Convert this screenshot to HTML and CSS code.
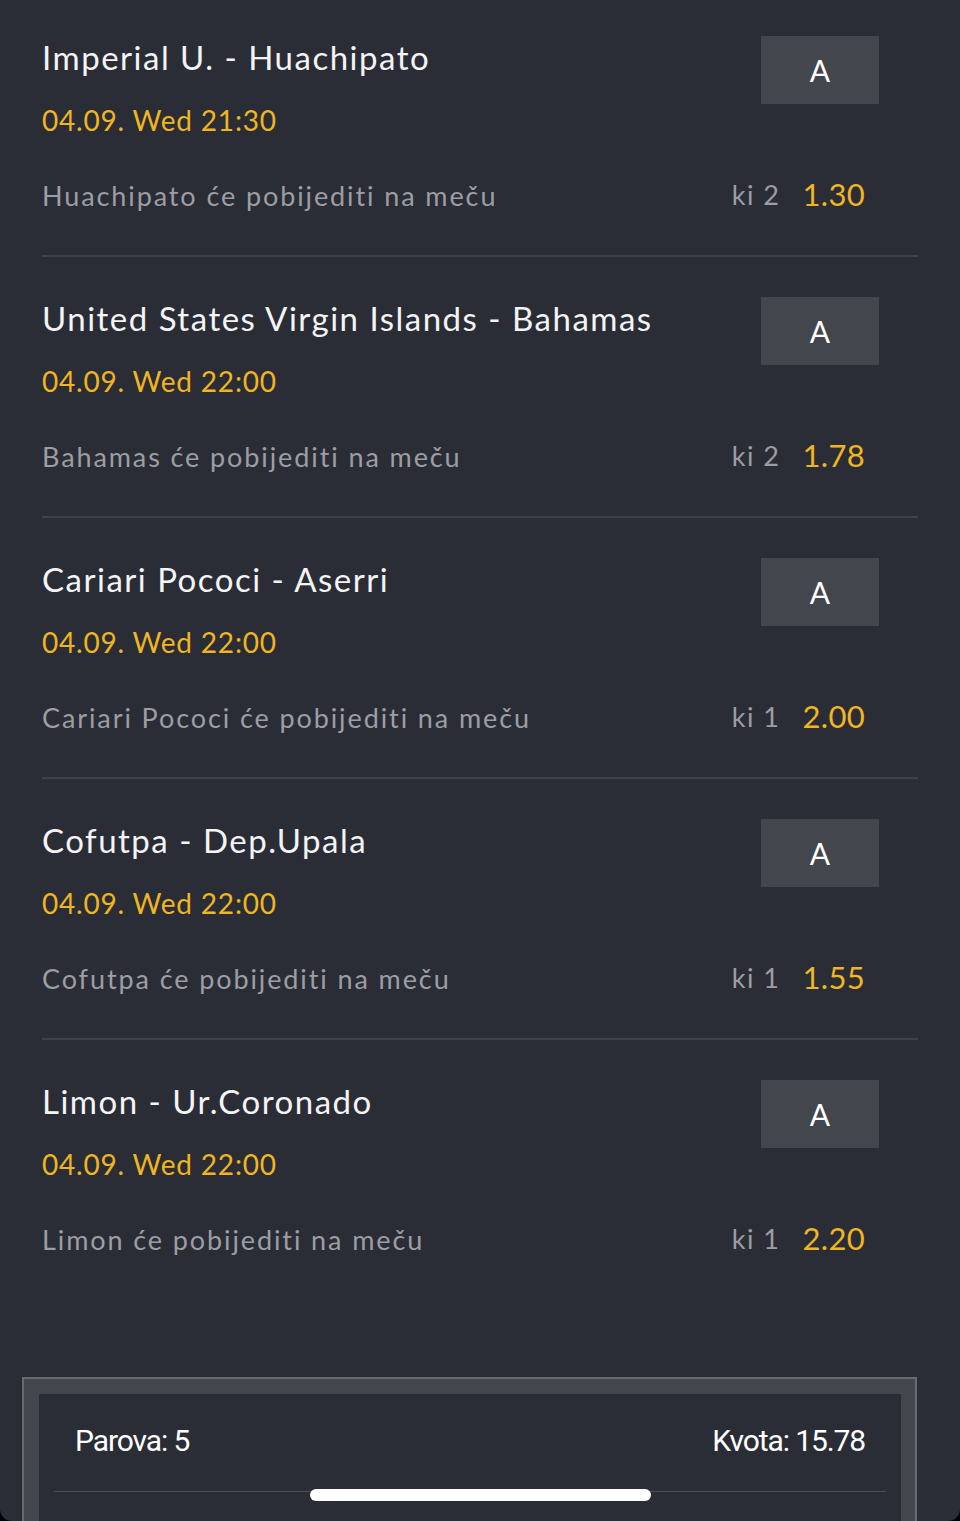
FILE: index.html
```html
<!DOCTYPE html>
<html>
<head>
<meta charset="utf-8">
<link rel="stylesheet" href="styles.css">
</head>
<body>
<div class="screen">
  <div class="list">
    <div class="item">
      <div class="info">
        <div class="title">Imperial U. - Huachipato</div>
        <div class="date">04.09. Wed 21:30</div>
        <div class="pick">Huachipato će pobijediti na meču</div>
      </div>
      <div class="side">
        <div class="btn">A</div>
        <div class="odds"><span class="ki">ki 2</span><span class="val">1.30</span></div>
      </div>
    </div>
    <div class="item">
      <div class="info">
        <div class="title">United States Virgin Islands - Bahamas</div>
        <div class="date">04.09. Wed 22:00</div>
        <div class="pick">Bahamas će pobijediti na meču</div>
      </div>
      <div class="side">
        <div class="btn">A</div>
        <div class="odds"><span class="ki">ki 2</span><span class="val">1.78</span></div>
      </div>
    </div>
    <div class="item">
      <div class="info">
        <div class="title">Cariari Pococi - Aserri</div>
        <div class="date">04.09. Wed 22:00</div>
        <div class="pick">Cariari Pococi će pobijediti na meču</div>
      </div>
      <div class="side">
        <div class="btn">A</div>
        <div class="odds"><span class="ki">ki 1</span><span class="val">2.00</span></div>
      </div>
    </div>
    <div class="item">
      <div class="info">
        <div class="title">Cofutpa - Dep.Upala</div>
        <div class="date">04.09. Wed 22:00</div>
        <div class="pick">Cofutpa će pobijediti na meču</div>
      </div>
      <div class="side">
        <div class="btn">A</div>
        <div class="odds"><span class="ki">ki 1</span><span class="val">1.55</span></div>
      </div>
    </div>
    <div class="item last">
      <div class="info">
        <div class="title">Limon - Ur.Coronado</div>
        <div class="date">04.09. Wed 22:00</div>
        <div class="pick">Limon će pobijediti na meču</div>
      </div>
      <div class="side">
        <div class="btn">A</div>
        <div class="odds"><span class="ki">ki 1</span><span class="val">2.20</span></div>
      </div>
    </div>
  </div>
  <div class="summary">
    <div class="summary-inner">
      <div class="summary-row">
        <span>Parova: 5</span>
        <span>Kvota: 15.78</span>
      </div>
      <div class="summary-line"></div>
    </div>
  </div>
  <div class="home-indicator"></div>
</div>
</body>
</html>
```
FILE: styles.css
```css
html, body {
  margin: 0;
  padding: 0;
  background: #000;
}
.screen {
  position: relative;
  width: 960px;
  height: 1521px;
  overflow: hidden;
  background: #2a2d36;
  border-radius: 0 0 12px 12px;
  font-family: "Lato", "Open Sans", sans-serif;
}
.list {
  padding: 0 42px;
}
.item {
  display: flex;
  justify-content: space-between;
  height: 255px;
  border-bottom: 2px solid #3e414a;
}
.item + .item {
  margin-top: 4px;
}
.item.last {
  border-bottom: none;
}
.info {
  padding-top: 37px;
  white-space: nowrap;
}
.title {
  color: #f4f4f5;
  font-size: 33px;
  line-height: 40px;
  letter-spacing: 1.5px;
}
.date {
  margin-top: 25px;
  color: #f0b521;
  font-size: 28px;
  line-height: 36px;
  letter-spacing: 0.8px;
}
.pick {
  margin-top: 41px;
  color: #9c9ea4;
  font-size: 27px;
  line-height: 34px;
  letter-spacing: 1.9px;
}
.side {
  display: flex;
  flex-direction: column;
  align-items: flex-end;
}
.btn {
  margin-top: 36px;
  margin-right: 39px;
  width: 118px;
  height: 68px;
  background: #43464d;
  color: #fff;
  font-size: 30px;
  line-height: 68px;
  text-align: center;
}
.odds {
  margin-top: 70px;
  height: 40px;
  padding-right: 53px;
  display: flex;
  align-items: center;
  gap: 22px;
  white-space: nowrap;
}
.ki {
  color: #9c9ea4;
  font-size: 27px;
  letter-spacing: 1.5px;
}
.val {
  color: #f0b521;
  font-size: 31px;
  letter-spacing: 0.3px;
}
.summary {
  margin: 78px 43px 0 22px;
  border: 2px solid #676a71;
  border-bottom: none;
  background: #43464d;
  padding: 15px 14px 0 15px;
  height: 200px;
}
.summary-inner {
  background: #2a2d36;
  height: 200px;
  padding: 0 15px;
}
.summary-row {
  display: flex;
  justify-content: space-between;
  padding: 27px 21px 0 21px;
  height: 70px;
  color: #fff;
  font-family: "Roboto", sans-serif;
  font-size: 30px;
  line-height: 40px;
  letter-spacing: -1.1px;
}
.summary-line {
  height: 1px;
  background: #4b4e56;
}
.home-indicator {
  position: absolute;
  left: 310px;
  top: 1489px;
  width: 341px;
  height: 12px;
  border-radius: 6px;
  background: #fff;
}
```
